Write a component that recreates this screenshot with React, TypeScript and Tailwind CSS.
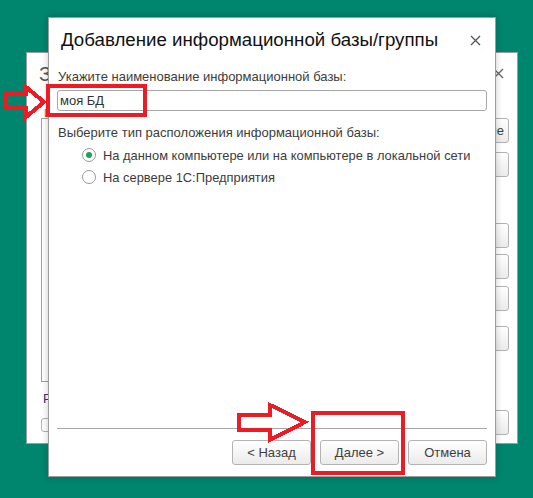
import React from 'react'

const font = { fontFamily: '"Liberation Sans", Arial, sans-serif' }

function CloseIcon({ color = '#555' }: { color?: string }) {
  return (
    <svg width="11" height="11" viewBox="0 0 11 11">
      <path d="M1 1 L10 10 M10 1 L1 10" stroke={color} strokeWidth="1.3" fill="none" />
    </svg>
  )
}

function Radio({ checked, label }: { checked?: boolean; label: string }) {
  return (
    <div className="flex h-[22px] items-center pl-[25px]">
      <span className="flex h-[14px] w-[14px] items-center justify-center rounded-full border border-[#9a9a9a] bg-white">
        {checked && <span className="h-[6px] w-[6px] rounded-full bg-[#21a05a]" />}
      </span>
      <span className="ml-[7px] text-[12.9px] leading-[15px] text-[#3c3c3c]">{label}</span>
    </div>
  )
}

function Button({ children }: { children: React.ReactNode }) {
  return (
    <button className="flex h-[25px] w-[79px] items-center justify-center rounded-[3px] border border-[#b3b3b3] bg-gradient-to-b from-white to-[#ebebeb] text-[13px] text-[#404040]">
      {children}
    </button>
  )
}

function SideButton({ top = 0, label = '' }: { top?: number; label?: string }) {
  return (
    <div
      className="flex h-[25px] w-[105px] items-center justify-end whitespace-nowrap rounded-[3px] border border-[#b3b3b3] bg-gradient-to-b from-white to-[#ebebeb] pr-[4px] text-[13px] text-[#404040]"
      style={{ marginTop: top }}
    >
      {label}
    </div>
  )
}

function BackWindow() {
  return (
    <div className="absolute left-[26px] top-[52px] flex h-[392px] w-[492px] flex-col border border-[#9c9c9c] bg-white pl-[14px] pr-[8px]">
      <div className="-ml-[2px] flex h-[41px] items-center justify-between pr-[5px]">
        <span className="text-[20px] text-[#555]">З</span>
        <CloseIcon color="#666" />
      </div>
      <div className="h-[24px] pl-[3px] pt-[15px] text-[11px] leading-[8px] text-[#1f9a52]">И</div>
      <div className="flex gap-[12px]">
        <div className="h-[264px] flex-1 border border-[#a0a0a0]" />
        <div className="flex w-[105px] flex-col">
          <SideButton label="1С:Предприятие" />
          <SideButton top={9} />
          <SideButton top={46} />
          <SideButton top={6} />
          <SideButton top={7} />
          <SideButton top={15} />
        </div>
      </div>
      <div className="h-[28px] pl-[2px] pt-[10px] text-[13px] leading-[14px] text-[#3a3070]">Р</div>
      <div className="flex h-[24px] items-start justify-between">
        <span className="mt-[8px] h-[14px] w-[14px] rounded-[3px] border border-[#b3b3b3] bg-white" />
        <SideButton />
      </div>
    </div>
  )
}

function Dialog() {
  return (
    <div className="absolute left-[48px] top-[17px] flex h-[460px] w-[448px] flex-col border border-[#9c9c9c] bg-white shadow-[0_0_7px_rgba(0,0,0,0.22)]">
      <div className="flex h-[45px] shrink-0 items-center justify-between pl-[12px] pr-[14px]">
        <span className="text-[18.7px] text-[#111]">Добавление информационной базы/группы</span>
        <CloseIcon />
      </div>
      <div className="flex flex-1 flex-col px-[8px]">
        <div className="mt-[6px] pl-[1px] text-[13px] leading-[15px] text-[#3c3c3c]">
          Укажите наименование информационной базы:
        </div>
        <div className="mt-[6px] flex h-[21px] items-center rounded-[3px] border border-[#a8a8a8] pl-[2px] text-[13px] text-[#333]">
          моя БД
        </div>
        <div className="mt-[14px] pl-[1px] text-[13px] leading-[15px] text-[#3c3c3c]">
          Выберите тип расположения информационной базы:
        </div>
        <div className="mt-[4px]">
          <Radio checked label="На данном компьютере или на компьютере в локальной сети" />
          <Radio label="На сервере 1С:Предприятия" />
        </div>
        <div className="flex-1" />
        <div className="h-px bg-[#a6a6a6]" />
        <div className="mb-[11px] mt-[11px] flex justify-end gap-[9px]">
          <Button>&lt; Назад</Button>
          <Button>Далее &gt;</Button>
          <Button>Отмена</Button>
        </div>
      </div>
    </div>
  )
}

export default function App() {
  return (
    <div className="relative h-[498px] w-[533px] overflow-hidden bg-[#00856f]" style={font}>
      <BackWindow />
      <Dialog />

      {/* red marks drawn over the screenshot */}
      <div className="absolute left-[46px] top-[84px] h-[33px] w-[101px] border-[4px] border-[#ed1c24]" />
      <div className="absolute left-[311px] top-[411px] h-[64px] w-[94px] border-[4px] border-[#ed1c24]" />
      <svg className="absolute left-0 top-0" width="533" height="498" shapeRendering="crispEdges">
        <path
          d="M5 94 L26 94 L26 87 L44 102 L26 117 L26 108 L5 108 Z"
          fill="none"
          stroke="#ed1c24"
          strokeWidth="4"
        />
        <path
          d="M239 415 L270 415 L270 405 L305 422 L270 440 L270 430 L239 430 Z"
          fill="none"
          stroke="#ed1c24"
          strokeWidth="4"
        />
      </svg>
    </div>
  )
}
